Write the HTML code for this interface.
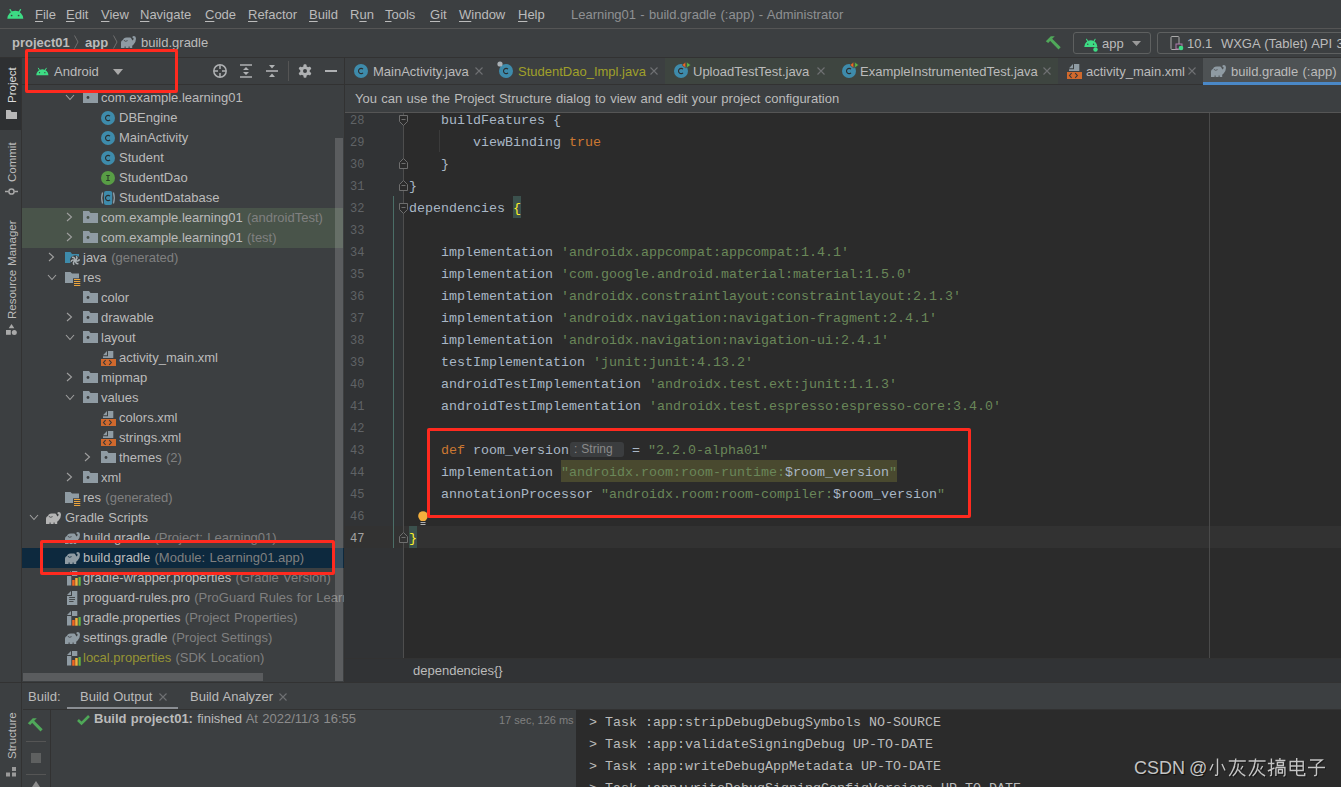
<!DOCTYPE html>
<html><head><meta charset="utf-8">
<style>
*{margin:0;padding:0;box-sizing:border-box}
html,body{width:1341px;height:787px;overflow:hidden;background:#3c3f41}
body{position:relative;font-family:"Liberation Sans",sans-serif;font-size:13px;color:#bbbbbb}
.a{position:absolute}
.t{position:absolute;white-space:pre;line-height:16px;height:16px;word-spacing:0.7px}
.m{position:absolute;white-space:pre;line-height:16px;height:16px;font-family:"Liberation Mono",monospace;font-size:13.33px}
.u{text-decoration:underline;text-underline-offset:2px}
svg{position:absolute;overflow:visible}
</style></head><body>

<div class="a" style="left:0px;top:28px;width:1341px;height:1px;background:#555555;"></div>
<svg style="left:7px;top:8px" width="17.0" height="11.0" viewBox="0 0 17 11"><path d="M0.3 10.8 A8 8 0 0 1 16.3 10.8 Z" fill="#3ddc84"/><path d="M4.6 4.2 L3.1 1.6 M12 4.2 L13.5 1.6" stroke="#3ddc84" stroke-width="1.3" stroke-linecap="round"/><circle cx="4.6" cy="7.5" r="0.85" fill="#3c3f41"/><circle cx="11.6" cy="7.5" r="0.85" fill="#3c3f41"/></svg>
<div class="t" style="left:35px;top:7px"><span class="u">F</span>ile</div>
<div class="t" style="left:66px;top:7px"><span class="u">E</span>dit</div>
<div class="t" style="left:101px;top:7px"><span class="u">V</span>iew</div>
<div class="t" style="left:140px;top:7px"><span class="u">N</span>avigate</div>
<div class="t" style="left:205px;top:7px"><span class="u">C</span>ode</div>
<div class="t" style="left:248px;top:7px"><span class="u">R</span>efactor</div>
<div class="t" style="left:309px;top:7px"><span class="u">B</span>uild</div>
<div class="t" style="left:350px;top:7px">R<span class="u">u</span>n</div>
<div class="t" style="left:385px;top:7px"><span class="u">T</span>ools</div>
<div class="t" style="left:430px;top:7px"><span class="u">G</span>it</div>
<div class="t" style="left:459px;top:7px"><span class="u">W</span>indow</div>
<div class="t" style="left:518px;top:7px"><span class="u">H</span>elp</div>
<div class="t" style="left:571px;top:7px;color:#8f9193">Learning01 - build.gradle (:app) - Administrator</div>
<div class="a" style="left:0px;top:57px;width:1341px;height:1px;background:#323232;"></div>
<div class="t" style="left:12px;top:35px;font-weight:700">project01</div>
<svg style="left:74px;top:35px" width="5" height="14" viewBox="0 0 5 14"><path d="M0.5 0.5 L4 7 L0.5 13.5" stroke="#6e6e6e" stroke-width="1" fill="none"/></svg>
<div class="t" style="left:85px;top:35px;font-weight:700">app</div>
<svg style="left:113px;top:35px" width="5" height="14" viewBox="0 0 5 14"><path d="M0.5 0.5 L4 7 L0.5 13.5" stroke="#6e6e6e" stroke-width="1" fill="none"/></svg>
<svg style="left:121px;top:36px" width="15" height="12" viewBox="0 0 15 12"><path d="M0 12 V6.5 Q0 4.6 1.8 4 L2.8 2.6 Q3.8 1.6 5.8 1.6 H8.8 Q10 1.6 10.6 3 L11.4 4.4 Q12.6 4 12.6 2.7 Q12.6 1.8 11.6 1.8 L11.2 1 Q11.9 0 13 0 Q15 0.3 15 2.8 Q15 6 12.6 8.4 L11.2 9.8 V12 H8.6 V10.6 H7.6 V12 H4.6 V10.6 H3.6 V12 Z" fill="#8f9ba3"/><path d="M2.8 4.3 Q4.6 6.2 6.6 4.6" stroke="#3c3f41" stroke-width="0.8" fill="none"/></svg>
<div class="t" style="left:141px;top:35px">build.gradle</div>
<svg style="left:1045px;top:35px" width="16" height="16" viewBox="0 0 16 16"><path d="M0.8 6.3 L5.8 1.2 H9.8 L7.2 3.8 L3.2 7.9 Z" fill="#50a85a"/><path d="M5.6 4.2 L14.6 13.4" stroke="#50a85a" stroke-width="3"/></svg>
<div class="a" style="left:1073px;top:32px;width:78px;height:22px;border:1px solid #5e6060;border-radius:3px"></div>
<svg style="left:1084px;top:38px" width="14.0" height="9.1" viewBox="0 0 17 11"><path d="M0.3 10.8 A8 8 0 0 1 16.3 10.8 Z" fill="#3ddc84"/><path d="M4.6 4.2 L3.1 1.6 M12 4.2 L13.5 1.6" stroke="#3ddc84" stroke-width="1.3" stroke-linecap="round"/><circle cx="4.6" cy="7.5" r="0.85" fill="#3c3f41"/><circle cx="11.6" cy="7.5" r="0.85" fill="#3c3f41"/></svg>
<svg style="left:1093px;top:47px" width="5" height="5"><circle cx="2.5" cy="2.5" r="2.2" fill="#3ddc84"/></svg>
<div class="t" style="left:1102px;top:36px">app</div>
<svg style="left:1132px;top:41px" width="9" height="5" viewBox="0 0 9 5"><path d="M0 0 H9 L4.5 5 Z" fill="#9a9a9a"/></svg>
<div class="a" style="left:1157px;top:32px;width:200px;height:22px;border:1px solid #5e6060;border-radius:3px"></div>
<svg style="left:1170px;top:36px" width="14" height="15" viewBox="0 0 14 15"><rect x="1" y="0.5" width="8" height="13" rx="1" stroke="#aaaaaa" stroke-width="1" fill="none"/><rect x="6" y="8" width="6" height="5" fill="#3c3f41" stroke="#b07ab0" stroke-width="1"/><circle cx="11" cy="12" r="2.3" fill="#3ddc84"/></svg>
<div class="t" style="left:1187px;top:36px">10.1  WXGA (Tablet) API 31</div>
<div class="a" style="left:21px;top:57px;width:1px;height:730px;background:#323232;"></div>
<div class="a" style="left:0px;top:58px;width:21px;height:72px;background:#2e3032;"></div>
<div class="t" style="left:4px;top:103px;transform:rotate(-90deg);transform-origin:0 0;font-size:11.5px;color:#dcdcdc">Project</div>
<svg style="left:6px;top:110px" width="11" height="9" viewBox="0 0 11 9"><path d="M0 0 H4.5 L5.5 2 H11 V9 H0 Z" fill="#b8b8b8"/></svg>
<div class="t" style="left:4px;top:182px;transform:rotate(-90deg);transform-origin:0 0;font-size:11.5px;color:#bbbbbb">Commit</div>
<svg style="left:5px;top:188px" width="13" height="7" viewBox="0 0 13 7"><circle cx="6.5" cy="3.5" r="2.6" stroke="#a9a9a9" stroke-width="1.5" fill="none"/><path d="M0 3.5 H3.5 M9.5 3.5 H13" stroke="#a9a9a9" stroke-width="1.5"/></svg>
<div class="t" style="left:4px;top:319px;transform:rotate(-90deg);transform-origin:0 0;font-size:11.5px;color:#bbbbbb">Resource Manager</div>
<svg style="left:6px;top:324px" width="11" height="11" viewBox="0 0 11 11"><path d="M5.5 0 L8.3 4.3 H2.7 Z" fill="#a9a9a9"/><rect x="0" y="6" width="4.8" height="4.8" fill="#a9a9a9"/><circle cx="8.3" cy="8.4" r="2.5" fill="#a9a9a9"/></svg>
<div class="t" style="left:4px;top:759px;transform:rotate(-90deg);transform-origin:0 0;font-size:11.5px;color:#bbbbbb">Structure</div>
<svg style="left:6px;top:767px" width="11" height="10" viewBox="0 0 11 10"><rect x="6" y="0" width="4" height="4" fill="#9a9a9a"/><rect x="0" y="5.5" width="4" height="4" fill="#9a9a9a"/><rect x="6" y="5.5" width="4" height="4" fill="#9a9a9a"/></svg>
<div class="a" style="left:344px;top:57px;width:1px;height:626px;background:#323232;"></div>
<div class="a" style="left:22px;top:84px;width:322px;height:1px;background:#323232;"></div>
<svg style="left:36px;top:67px" width="13.0" height="8.4" viewBox="0 0 17 11"><path d="M0.3 10.8 A8 8 0 0 1 16.3 10.8 Z" fill="#3ddc84"/><path d="M4.6 4.2 L3.1 1.6 M12 4.2 L13.5 1.6" stroke="#3ddc84" stroke-width="1.3" stroke-linecap="round"/><circle cx="4.6" cy="7.5" r="0.85" fill="#3c3f41"/><circle cx="11.6" cy="7.5" r="0.85" fill="#3c3f41"/></svg>
<div class="t" style="left:54px;top:64px">Android</div>
<svg style="left:113px;top:69px" width="10" height="6" viewBox="0 0 10 6"><path d="M0 0 H10 L5 6 Z" fill="#a9a9a9"/></svg>
<svg style="left:213px;top:64px" width="14" height="14" viewBox="0 0 14 14"><circle cx="7" cy="7" r="6.2" stroke="#afb1b3" stroke-width="1.5" fill="none"/><path d="M7 1 V5 M7 9 V13 M1 7 H5 M9 7 H13" stroke="#afb1b3" stroke-width="1.5"/></svg>
<svg style="left:240px;top:64px" width="12" height="14" viewBox="0 0 12 14"><path d="M0 1 H12 M0 13 H12" stroke="#afb1b3" stroke-width="1.6"/><path d="M3 6 L6 3 L9 6 Z M3 8 L6 11 L9 8 Z" fill="#afb1b3"/></svg>
<svg style="left:266px;top:64px" width="12" height="14" viewBox="0 0 12 14"><path d="M0 7 H12" stroke="#afb1b3" stroke-width="1.6"/><path d="M3 1 L6 4.5 L9 1 Z M3 13 L6 9.5 L9 13 Z" fill="#afb1b3"/></svg>
<div class="a" style="left:288px;top:61px;width:1px;height:20px;background:#555555;"></div>
<svg style="left:298px;top:64px" width="14" height="14" viewBox="0 0 14 14"><g fill="#afb1b3"><circle cx="7" cy="7" r="4.8"/><rect x="5.5" y="0.3" width="3" height="13.4" rx="1"/><rect x="5.5" y="0.3" width="3" height="13.4" rx="1" transform="rotate(60 7 7)"/><rect x="5.5" y="0.3" width="3" height="13.4" rx="1" transform="rotate(120 7 7)"/></g><circle cx="7" cy="7" r="2" fill="#3c3f41"/></svg>
<div class="a" style="left:325px;top:70px;width:12px;height:2px;background:#afb1b3;"></div>
<div class="a" style="left:0;top:0;width:344px;height:683px;overflow:hidden">
<div class="a" style="left:22px;top:208px;width:321px;height:40px;background:#49544a;"></div>
<div class="a" style="left:22px;top:548px;width:322px;height:20px;background:#0d293e;"></div>
<svg style="left:65px;top:94px" width="10" height="7" viewBox="0 0 10 7"><path d="M1 1 L5 5.5 L9 1" stroke="#a0a0a0" stroke-width="1.1" fill="none"/></svg>
<svg style="left:83px;top:91px" width="15" height="12" viewBox="0 0 15 12"><path d="M0 0 H6 L7.5 2 H15 V12 H0 Z" fill="#8f9ba3"/><circle cx="5" cy="6.5" r="1.4" fill="#3c3f41"/></svg>
<div class="t" style="left:101px;top:90px">com.example.learning01</div>
<svg style="left:101px;top:111px" width="14" height="14" viewBox="0 0 14 14"><circle cx="7" cy="7" r="7" fill="#3e8bab"/><path d="M9 5.2 A2.6 2.6 0 1 0 9 8.8" stroke="#2b2d2e" stroke-width="1.1" fill="none"/></svg>
<div class="t" style="left:119px;top:110px">DBEngine</div>
<svg style="left:101px;top:131px" width="14" height="14" viewBox="0 0 14 14"><circle cx="7" cy="7" r="7" fill="#3e8bab"/><path d="M9 5.2 A2.6 2.6 0 1 0 9 8.8" stroke="#2b2d2e" stroke-width="1.1" fill="none"/></svg>
<div class="t" style="left:119px;top:130px">MainActivity</div>
<svg style="left:101px;top:151px" width="14" height="14" viewBox="0 0 14 14"><circle cx="7" cy="7" r="7" fill="#3e8bab"/><path d="M9 5.2 A2.6 2.6 0 1 0 9 8.8" stroke="#2b2d2e" stroke-width="1.1" fill="none"/></svg>
<div class="t" style="left:119px;top:150px">Student</div>
<svg style="left:101px;top:171px" width="14" height="14" viewBox="0 0 14 14"><circle cx="7" cy="7" r="7" fill="#589d45"/><path d="M5.2 4.5 H8.8 M7 4.5 V9.5 M5.2 9.5 H8.8" stroke="#2b3f29" stroke-width="1.1" fill="none"/></svg>
<div class="t" style="left:119px;top:170px">StudentDao</div>
<svg style="left:101px;top:191px" width="14" height="14" viewBox="0 0 14 14"><path d="M1.6 1.5 Q-0.3 7 1.6 12.5 M12.4 1.5 Q14.3 7 12.4 12.5" stroke="#8f9ba3" stroke-width="1.3" fill="none"/><rect x="3" y="0" width="8.2" height="14" rx="2" fill="#3e8bab"/><path d="M9 5.2 A2.6 2.6 0 1 0 9 8.8" stroke="#2b2d2e" stroke-width="1.1" fill="none"/></svg>
<div class="t" style="left:119px;top:190px">StudentDatabase</div>
<svg style="left:66px;top:212px" width="7" height="10" viewBox="0 0 7 10"><path d="M1 1 L5.5 5 L1 9" stroke="#a0a0a0" stroke-width="1.1" fill="none"/></svg>
<svg style="left:83px;top:211px" width="15" height="12" viewBox="0 0 15 12"><path d="M0 0 H6 L7.5 2 H15 V12 H0 Z" fill="#8f9ba3"/><circle cx="5" cy="6.5" r="1.4" fill="#49544a"/></svg>
<div class="t" style="left:101px;top:210px">com.example.learning01<span style="color:#808080"> (androidTest)</span></div>
<svg style="left:66px;top:232px" width="7" height="10" viewBox="0 0 7 10"><path d="M1 1 L5.5 5 L1 9" stroke="#a0a0a0" stroke-width="1.1" fill="none"/></svg>
<svg style="left:83px;top:231px" width="15" height="12" viewBox="0 0 15 12"><path d="M0 0 H6 L7.5 2 H15 V12 H0 Z" fill="#8f9ba3"/><circle cx="5" cy="6.5" r="1.4" fill="#49544a"/></svg>
<div class="t" style="left:101px;top:230px">com.example.learning01<span style="color:#808080"> (test)</span></div>
<svg style="left:48px;top:252px" width="7" height="10" viewBox="0 0 7 10"><path d="M1 1 L5.5 5 L1 9" stroke="#a0a0a0" stroke-width="1.1" fill="none"/></svg>
<svg style="left:65px;top:250px" width="16" height="16" viewBox="0 0 16 16"><path d="M0 2 H5.5 L7 4 H14 V13 H0 Z" fill="#3e8bab"/><circle cx="10.2" cy="10.5" r="5.2" fill="#3c3f41"/><g stroke="#aab1b5" stroke-width="1.5" fill="none"><path d="M10.2 10.5 Q13.2 8.2 11.2 6.2" transform="rotate(0 10.2 10.5)"/><path d="M10.2 10.5 Q13.2 8.2 11.2 6.2" transform="rotate(60 10.2 10.5)"/><path d="M10.2 10.5 Q13.2 8.2 11.2 6.2" transform="rotate(120 10.2 10.5)"/><path d="M10.2 10.5 Q13.2 8.2 11.2 6.2" transform="rotate(180 10.2 10.5)"/><path d="M10.2 10.5 Q13.2 8.2 11.2 6.2" transform="rotate(240 10.2 10.5)"/><path d="M10.2 10.5 Q13.2 8.2 11.2 6.2" transform="rotate(300 10.2 10.5)"/></g></svg>
<div class="t" style="left:83px;top:250px">java<span style="color:#808080"> (generated)</span></div>
<svg style="left:47px;top:274px" width="10" height="7" viewBox="0 0 10 7"><path d="M1 1 L5 5.5 L9 1" stroke="#a0a0a0" stroke-width="1.1" fill="none"/></svg>
<svg style="left:65px;top:270px" width="16" height="17" viewBox="0 0 16 17"><path d="M0 2 H5.5 L7 3.5 H14 V13 H0 Z" fill="#8f9ba3"/><rect x="8" y="8.3" width="8" height="8.5" fill="#3c3f41"/><path d="M9 9.5 H15.3 M9 11.5 H15.3 M9 13.5 H15.3 M9 15.5 H15.3" stroke="#e8a33d" stroke-width="1.1"/></svg>
<div class="t" style="left:83px;top:270px">res</div>
<svg style="left:83px;top:291px" width="15" height="12" viewBox="0 0 15 12"><path d="M0 0 H6 L7.5 2 H15 V12 H0 Z" fill="#8f9ba3"/><circle cx="5" cy="6.5" r="1.4" fill="#3c3f41"/></svg>
<div class="t" style="left:101px;top:290px">color</div>
<svg style="left:66px;top:312px" width="7" height="10" viewBox="0 0 7 10"><path d="M1 1 L5.5 5 L1 9" stroke="#a0a0a0" stroke-width="1.1" fill="none"/></svg>
<svg style="left:83px;top:311px" width="15" height="12" viewBox="0 0 15 12"><path d="M0 0 H6 L7.5 2 H15 V12 H0 Z" fill="#8f9ba3"/><circle cx="5" cy="6.5" r="1.4" fill="#3c3f41"/></svg>
<div class="t" style="left:101px;top:310px">drawable</div>
<svg style="left:65px;top:334px" width="10" height="7" viewBox="0 0 10 7"><path d="M1 1 L5 5.5 L9 1" stroke="#a0a0a0" stroke-width="1.1" fill="none"/></svg>
<svg style="left:83px;top:331px" width="15" height="12" viewBox="0 0 15 12"><path d="M0 0 H6 L7.5 2 H15 V12 H0 Z" fill="#8f9ba3"/><circle cx="5" cy="6.5" r="1.4" fill="#3c3f41"/></svg>
<div class="t" style="left:101px;top:330px">layout</div>
<svg style="left:101px;top:351px" width="15" height="15" viewBox="0 0 15 15"><path d="M2 4.2 L6 0 V4.2 Z" fill="#8f9ba3"/><path d="M7 0 H12.3 V7 H2 V5.2 H7 Z" fill="#8f9ba3"/><rect x="0" y="8" width="15" height="7" fill="#d0692d"/><path d="M4.6 9.2 L2.5 11.5 L4.6 13.8 M8.2 9.2 L10.3 11.5 L8.2 13.8" stroke="#35373a" stroke-width="1.1" fill="none"/></svg>
<div class="t" style="left:119px;top:350px">activity_main.xml</div>
<svg style="left:66px;top:372px" width="7" height="10" viewBox="0 0 7 10"><path d="M1 1 L5.5 5 L1 9" stroke="#a0a0a0" stroke-width="1.1" fill="none"/></svg>
<svg style="left:83px;top:371px" width="15" height="12" viewBox="0 0 15 12"><path d="M0 0 H6 L7.5 2 H15 V12 H0 Z" fill="#8f9ba3"/><circle cx="5" cy="6.5" r="1.4" fill="#3c3f41"/></svg>
<div class="t" style="left:101px;top:370px">mipmap</div>
<svg style="left:65px;top:394px" width="10" height="7" viewBox="0 0 10 7"><path d="M1 1 L5 5.5 L9 1" stroke="#a0a0a0" stroke-width="1.1" fill="none"/></svg>
<svg style="left:83px;top:391px" width="15" height="12" viewBox="0 0 15 12"><path d="M0 0 H6 L7.5 2 H15 V12 H0 Z" fill="#8f9ba3"/><circle cx="5" cy="6.5" r="1.4" fill="#3c3f41"/></svg>
<div class="t" style="left:101px;top:390px">values</div>
<svg style="left:101px;top:411px" width="15" height="15" viewBox="0 0 15 15"><path d="M2 4.2 L6 0 V4.2 Z" fill="#8f9ba3"/><path d="M7 0 H12.3 V7 H2 V5.2 H7 Z" fill="#8f9ba3"/><rect x="0" y="8" width="15" height="7" fill="#d0692d"/><path d="M4.6 9.2 L2.5 11.5 L4.6 13.8 M8.2 9.2 L10.3 11.5 L8.2 13.8" stroke="#35373a" stroke-width="1.1" fill="none"/></svg>
<div class="t" style="left:119px;top:410px">colors.xml</div>
<svg style="left:101px;top:431px" width="15" height="15" viewBox="0 0 15 15"><path d="M2 4.2 L6 0 V4.2 Z" fill="#8f9ba3"/><path d="M7 0 H12.3 V7 H2 V5.2 H7 Z" fill="#8f9ba3"/><rect x="0" y="8" width="15" height="7" fill="#d0692d"/><path d="M4.6 9.2 L2.5 11.5 L4.6 13.8 M8.2 9.2 L10.3 11.5 L8.2 13.8" stroke="#35373a" stroke-width="1.1" fill="none"/></svg>
<div class="t" style="left:119px;top:430px">strings.xml</div>
<svg style="left:84px;top:452px" width="7" height="10" viewBox="0 0 7 10"><path d="M1 1 L5.5 5 L1 9" stroke="#a0a0a0" stroke-width="1.1" fill="none"/></svg>
<svg style="left:101px;top:451px" width="15" height="12" viewBox="0 0 15 12"><path d="M0 0 H6 L7.5 2 H15 V12 H0 Z" fill="#8f9ba3"/><circle cx="5" cy="6.5" r="1.4" fill="#3c3f41"/></svg>
<div class="t" style="left:119px;top:450px">themes<span style="color:#808080"> (2)</span></div>
<svg style="left:66px;top:472px" width="7" height="10" viewBox="0 0 7 10"><path d="M1 1 L5.5 5 L1 9" stroke="#a0a0a0" stroke-width="1.1" fill="none"/></svg>
<svg style="left:83px;top:471px" width="15" height="12" viewBox="0 0 15 12"><path d="M0 0 H6 L7.5 2 H15 V12 H0 Z" fill="#8f9ba3"/><circle cx="5" cy="6.5" r="1.4" fill="#3c3f41"/></svg>
<div class="t" style="left:101px;top:470px">xml</div>
<svg style="left:65px;top:490px" width="16" height="17" viewBox="0 0 16 17"><path d="M0 2 H5.5 L7 3.5 H14 V13 H0 Z" fill="#8f9ba3"/><rect x="8" y="8.3" width="8" height="8.5" fill="#3c3f41"/><path d="M9 9.5 H15.3 M9 11.5 H15.3 M9 13.5 H15.3 M9 15.5 H15.3" stroke="#e8a33d" stroke-width="1.1"/></svg>
<div class="t" style="left:83px;top:490px">res<span style="color:#808080"> (generated)</span></div>
<svg style="left:29px;top:514px" width="10" height="7" viewBox="0 0 10 7"><path d="M1 1 L5 5.5 L9 1" stroke="#a0a0a0" stroke-width="1.1" fill="none"/></svg>
<svg style="left:46px;top:512px" width="15" height="12" viewBox="0 0 15 12"><path d="M0 12 V6.5 Q0 4.6 1.8 4 L2.8 2.6 Q3.8 1.6 5.8 1.6 H8.8 Q10 1.6 10.6 3 L11.4 4.4 Q12.6 4 12.6 2.7 Q12.6 1.8 11.6 1.8 L11.2 1 Q11.9 0 13 0 Q15 0.3 15 2.8 Q15 6 12.6 8.4 L11.2 9.8 V12 H8.6 V10.6 H7.6 V12 H4.6 V10.6 H3.6 V12 Z" fill="#b4b4b4"/><path d="M2.8 4.3 Q4.6 6.2 6.6 4.6" stroke="#3c3f41" stroke-width="0.8" fill="none"/></svg>
<div class="t" style="left:65px;top:510px">Gradle Scripts</div>
<svg style="left:65px;top:532px" width="15" height="12" viewBox="0 0 15 12"><path d="M0 12 V6.5 Q0 4.6 1.8 4 L2.8 2.6 Q3.8 1.6 5.8 1.6 H8.8 Q10 1.6 10.6 3 L11.4 4.4 Q12.6 4 12.6 2.7 Q12.6 1.8 11.6 1.8 L11.2 1 Q11.9 0 13 0 Q15 0.3 15 2.8 Q15 6 12.6 8.4 L11.2 9.8 V12 H8.6 V10.6 H7.6 V12 H4.6 V10.6 H3.6 V12 Z" fill="#8f9ba3"/><path d="M2.8 4.3 Q4.6 6.2 6.6 4.6" stroke="#3c3f41" stroke-width="0.8" fill="none"/></svg>
<div class="t" style="left:83px;top:530px">build.gradle<span style="color:#808080"> (Project: Learning01)</span></div>
<svg style="left:65px;top:552px" width="15" height="12" viewBox="0 0 15 12"><path d="M0 12 V6.5 Q0 4.6 1.8 4 L2.8 2.6 Q3.8 1.6 5.8 1.6 H8.8 Q10 1.6 10.6 3 L11.4 4.4 Q12.6 4 12.6 2.7 Q12.6 1.8 11.6 1.8 L11.2 1 Q11.9 0 13 0 Q15 0.3 15 2.8 Q15 6 12.6 8.4 L11.2 9.8 V12 H8.6 V10.6 H7.6 V12 H4.6 V10.6 H3.6 V12 Z" fill="#8f9ba3"/><path d="M2.8 4.3 Q4.6 6.2 6.6 4.6" stroke="#0d293e" stroke-width="0.8" fill="none"/></svg>
<div class="t" style="left:83px;top:550px">build.gradle<span style="color:#808080"> (Module: Learning01.app)</span></div>
<svg style="left:67px;top:571px" width="15" height="15" viewBox="0 0 15 15"><path d="M0 4 L4 0 V4 Z" fill="#8f9ba3"/><path d="M5 0 H10.3 V14.5 H0 V5 H5 Z" fill="#8f9ba3"/><rect x="4.3" y="5" width="11" height="10" fill="#3c3f41"/><rect x="5.2" y="9" width="2.5" height="5.7" fill="#f26522"/><rect x="8.2" y="7" width="2.5" height="7.7" fill="#f4af3d"/><rect x="11.5" y="6" width="2.2" height="8.7" fill="#62b543"/></svg>
<div class="t" style="left:83px;top:570px">gradle-wrapper.properties<span style="color:#808080"> (Gradle Version)</span></div>
<svg style="left:67px;top:591px" width="11" height="15" viewBox="0 0 11 15"><path d="M0 4 L4 0 V4 Z" fill="#8f9ba3"/><path d="M5 0 H10.3 V14 H0 V5 H5 Z" fill="#8f9ba3"/><path d="M2.2 6.5 H8 M2.2 8.5 H8 M2.2 10.5 H6.5" stroke="#3c3f41" stroke-width="0.9"/></svg>
<div class="t" style="left:83px;top:590px">proguard-rules.pro<span style="color:#808080"> (ProGuard Rules for Learning01.app)</span></div>
<svg style="left:67px;top:611px" width="15" height="15" viewBox="0 0 15 15"><path d="M0 4 L4 0 V4 Z" fill="#8f9ba3"/><path d="M5 0 H10.3 V14.5 H0 V5 H5 Z" fill="#8f9ba3"/><rect x="4.3" y="5" width="11" height="10" fill="#3c3f41"/><rect x="5.2" y="9" width="2.5" height="5.7" fill="#f26522"/><rect x="8.2" y="7" width="2.5" height="7.7" fill="#f4af3d"/><rect x="11.5" y="6" width="2.2" height="8.7" fill="#62b543"/></svg>
<div class="t" style="left:83px;top:610px">gradle.properties<span style="color:#808080"> (Project Properties)</span></div>
<svg style="left:65px;top:632px" width="15" height="12" viewBox="0 0 15 12"><path d="M0 12 V6.5 Q0 4.6 1.8 4 L2.8 2.6 Q3.8 1.6 5.8 1.6 H8.8 Q10 1.6 10.6 3 L11.4 4.4 Q12.6 4 12.6 2.7 Q12.6 1.8 11.6 1.8 L11.2 1 Q11.9 0 13 0 Q15 0.3 15 2.8 Q15 6 12.6 8.4 L11.2 9.8 V12 H8.6 V10.6 H7.6 V12 H4.6 V10.6 H3.6 V12 Z" fill="#8f9ba3"/><path d="M2.8 4.3 Q4.6 6.2 6.6 4.6" stroke="#3c3f41" stroke-width="0.8" fill="none"/></svg>
<div class="t" style="left:83px;top:630px">settings.gradle<span style="color:#808080"> (Project Settings)</span></div>
<svg style="left:67px;top:651px" width="15" height="15" viewBox="0 0 15 15"><path d="M0 4 L4 0 V4 Z" fill="#8f9ba3"/><path d="M5 0 H10.3 V14.5 H0 V5 H5 Z" fill="#8f9ba3"/><rect x="4.3" y="5" width="11" height="10" fill="#3c3f41"/><rect x="5.2" y="9" width="2.5" height="5.7" fill="#f26522"/><rect x="8.2" y="7" width="2.5" height="7.7" fill="#f4af3d"/><rect x="11.5" y="6" width="2.2" height="8.7" fill="#62b543"/></svg>
<div class="t" style="left:83px;top:650px;color:#969434">local.properties<span style="color:#808080"> (SDK Location)</span></div>
</div>
<div class="a" style="left:335px;top:138px;width:8px;height:543px;background:rgba(255,255,255,0.16);"></div>
<div class="a" style="left:23px;top:673px;width:240px;height:8px;background:#5a5c5e;"></div>
<div class="a" style="left:345px;top:84px;width:996px;height:1px;background:#323232;"></div>
<div class="a" style="left:665px;top:58px;width:393px;height:26px;background:#3e4540;"></div>
<div class="a" style="left:1203px;top:58px;width:138px;height:26px;background:#4e5254;"></div>
<svg style="left:354px;top:64px" width="14" height="14" viewBox="0 0 14 14"><circle cx="7" cy="7" r="7" fill="#3e8bab"/><path d="M9 5.2 A2.6 2.6 0 1 0 9 8.8" stroke="#2b2d2e" stroke-width="1.1" fill="none"/></svg>
<div class="t" style="left:373px;top:64px">MainActivity.java</div>
<svg style="left:475px;top:67px" width="8" height="8" viewBox="0 0 8 8"><path d="M0.5 0.5 L7.5 7.5 M7.5 0.5 L0.5 7.5" stroke="#6f7173" stroke-width="1.1"/></svg>
<svg style="left:499px;top:64px" width="14" height="14" viewBox="0 0 14 14"><circle cx="7" cy="7" r="7" fill="#3e8bab"/><path d="M9 5.2 A2.6 2.6 0 1 0 9 8.8" stroke="#2b2d2e" stroke-width="1.1" fill="none"/></svg>
<svg style="left:497px;top:61px" width="6" height="6"><circle cx="3" cy="3" r="2.6" fill="#a9b0b5"/></svg>
<div class="t" style="left:518px;top:64px;color:#a0a02a">StudentDao_Impl.java</div>
<svg style="left:650px;top:67px" width="8" height="8" viewBox="0 0 8 8"><path d="M0.5 0.5 L7.5 7.5 M7.5 0.5 L0.5 7.5" stroke="#6f7173" stroke-width="1.1"/></svg>
<svg style="left:674px;top:64px" width="14" height="14" viewBox="0 0 14 14"><circle cx="7" cy="7" r="7" fill="#3e8bab"/><path d="M9 5.2 A2.6 2.6 0 1 0 9 8.8" stroke="#2b2d2e" stroke-width="1.1" fill="none"/></svg>
<svg style="left:682px;top:62px" width="9" height="7" viewBox="0 0 9 7"><path d="M3.7 0 V6 L0 3 Z" fill="#f26522" stroke="#3e4540" stroke-width="0.6"/><path d="M4.7 0 V6 L8.6 3 Z" fill="#62b543" stroke="#3e4540" stroke-width="0.6"/></svg>
<div class="t" style="left:693px;top:64px">UploadTestTest.java</div>
<svg style="left:817px;top:67px" width="8" height="8" viewBox="0 0 8 8"><path d="M0.5 0.5 L7.5 7.5 M7.5 0.5 L0.5 7.5" stroke="#6f7173" stroke-width="1.1"/></svg>
<svg style="left:842px;top:64px" width="14" height="14" viewBox="0 0 14 14"><circle cx="7" cy="7" r="7" fill="#3e8bab"/><path d="M9 5.2 A2.6 2.6 0 1 0 9 8.8" stroke="#2b2d2e" stroke-width="1.1" fill="none"/></svg>
<svg style="left:850px;top:62px" width="9" height="7" viewBox="0 0 9 7"><path d="M3.7 0 V6 L0 3 Z" fill="#f26522" stroke="#3e4540" stroke-width="0.6"/><path d="M4.7 0 V6 L8.6 3 Z" fill="#62b543" stroke="#3e4540" stroke-width="0.6"/></svg>
<div class="t" style="left:860px;top:64px">ExampleInstrumentedTest.java</div>
<svg style="left:1043px;top:67px" width="8" height="8" viewBox="0 0 8 8"><path d="M0.5 0.5 L7.5 7.5 M7.5 0.5 L0.5 7.5" stroke="#6f7173" stroke-width="1.1"/></svg>
<svg style="left:1067px;top:64px" width="15" height="15" viewBox="0 0 15 15"><path d="M2 4.2 L6 0 V4.2 Z" fill="#8f9ba3"/><path d="M7 0 H12.3 V7 H2 V5.2 H7 Z" fill="#8f9ba3"/><rect x="0" y="8" width="15" height="7" fill="#d0692d"/><path d="M4.6 9.2 L2.5 11.5 L4.6 13.8 M8.2 9.2 L10.3 11.5 L8.2 13.8" stroke="#35373a" stroke-width="1.1" fill="none"/></svg>
<div class="t" style="left:1086px;top:64px">activity_main.xml</div>
<svg style="left:1188px;top:67px" width="8" height="8" viewBox="0 0 8 8"><path d="M0.5 0.5 L7.5 7.5 M7.5 0.5 L0.5 7.5" stroke="#6f7173" stroke-width="1.1"/></svg>
<svg style="left:1211px;top:65px" width="15" height="12" viewBox="0 0 15 12"><path d="M0 12 V6.5 Q0 4.6 1.8 4 L2.8 2.6 Q3.8 1.6 5.8 1.6 H8.8 Q10 1.6 10.6 3 L11.4 4.4 Q12.6 4 12.6 2.7 Q12.6 1.8 11.6 1.8 L11.2 1 Q11.9 0 13 0 Q15 0.3 15 2.8 Q15 6 12.6 8.4 L11.2 9.8 V12 H8.6 V10.6 H7.6 V12 H4.6 V10.6 H3.6 V12 Z" fill="#8f9ba3"/><path d="M2.8 4.3 Q4.6 6.2 6.6 4.6" stroke="#4e5254" stroke-width="0.8" fill="none"/></svg>
<div class="t" style="left:1231px;top:64px">build.gradle (:app)</div>
<div class="a" style="left:1203px;top:82px;width:138px;height:3px;background:#4a88c7;"></div>
<div class="a" style="left:345px;top:85px;width:996px;height:27px;background:#3c3f41;"></div>
<div class="t" style="left:355px;top:91px">You can use the Project Structure dialog to view and edit your project configuration</div>
<div class="a" style="left:345px;top:112px;width:996px;height:1px;background:#555555;"></div>
<div class="a" style="left:345px;top:113px;width:996px;height:545px;background:#2b2b2b;"></div>
<div class="a" style="left:345px;top:113px;width:58px;height:545px;background:#313335;"></div>
<div class="a" style="left:345px;top:526px;width:996px;height:22px;background:#323232;"></div>
<div class="a" style="left:1209px;top:113px;width:1px;height:545px;background:#4a4a4a;"></div>
<div class="a" style="left:393px;top:196px;width:1px;height:352px;background:#4b6e67;"></div>
<div class="a" style="left:403px;top:113px;width:1px;height:545px;background:#4e4e4e;"></div>
<div class="a" style="left:513px;top:196px;width:8px;height:22px;background:#3b514d;"></div>
<div class="a" style="left:409px;top:526px;width:8px;height:22px;background:#3b514d;"></div>
<div class="a" style="left:561px;top:460px;width:336px;height:22px;background:#49492f;"></div>
<div class="m" style="left:350px;top:113px;color:#606366;font-size:12px">28</div>
<div class="m" style="left:409px;top:112.5px;color:#a9b7c6">    buildFeatures {</div>
<div class="m" style="left:350px;top:135px;color:#606366;font-size:12px">29</div>
<div class="m" style="left:409px;top:134.5px;color:#a9b7c6">        viewBinding <span style="color:#cc7832">true</span></div>
<div class="m" style="left:350px;top:157px;color:#606366;font-size:12px">30</div>
<div class="m" style="left:409px;top:156.5px;color:#a9b7c6">    }</div>
<div class="m" style="left:350px;top:179px;color:#606366;font-size:12px">31</div>
<div class="m" style="left:409px;top:178.5px;color:#a9b7c6">}</div>
<div class="m" style="left:350px;top:201px;color:#606366;font-size:12px">32</div>
<div class="m" style="left:409px;top:200.5px;color:#a9b7c6">dependencies <span style="color:#ffef28">{</span></div>
<div class="m" style="left:350px;top:223px;color:#606366;font-size:12px">33</div>
<div class="m" style="left:350px;top:245px;color:#606366;font-size:12px">34</div>
<div class="m" style="left:409px;top:244.5px;color:#a9b7c6">    implementation <span style="color:#6a8759">'androidx.appcompat:appcompat:1.4.1'</span></div>
<div class="m" style="left:350px;top:267px;color:#606366;font-size:12px">35</div>
<div class="m" style="left:409px;top:266.5px;color:#a9b7c6">    implementation <span style="color:#6a8759">'com.google.android.material:material:1.5.0'</span></div>
<div class="m" style="left:350px;top:289px;color:#606366;font-size:12px">36</div>
<div class="m" style="left:409px;top:288.5px;color:#a9b7c6">    implementation <span style="color:#6a8759">'androidx.constraintlayout:constraintlayout:2.1.3'</span></div>
<div class="m" style="left:350px;top:311px;color:#606366;font-size:12px">37</div>
<div class="m" style="left:409px;top:310.5px;color:#a9b7c6">    implementation <span style="color:#6a8759">'androidx.navigation:navigation-fragment:2.4.1'</span></div>
<div class="m" style="left:350px;top:333px;color:#606366;font-size:12px">38</div>
<div class="m" style="left:409px;top:332.5px;color:#a9b7c6">    implementation <span style="color:#6a8759">'androidx.navigation:navigation-ui:2.4.1'</span></div>
<div class="m" style="left:350px;top:355px;color:#606366;font-size:12px">39</div>
<div class="m" style="left:409px;top:354.5px;color:#a9b7c6">    testImplementation <span style="color:#6a8759">'junit:junit:4.13.2'</span></div>
<div class="m" style="left:350px;top:377px;color:#606366;font-size:12px">40</div>
<div class="m" style="left:409px;top:376.5px;color:#a9b7c6">    androidTestImplementation <span style="color:#6a8759">'androidx.test.ext:junit:1.1.3'</span></div>
<div class="m" style="left:350px;top:399px;color:#606366;font-size:12px">41</div>
<div class="m" style="left:409px;top:398.5px;color:#a9b7c6">    androidTestImplementation <span style="color:#6a8759">'androidx.test.espresso:espresso-core:3.4.0'</span></div>
<div class="m" style="left:350px;top:421px;color:#606366;font-size:12px">42</div>
<div class="m" style="left:350px;top:443px;color:#606366;font-size:12px">43</div>
<div class="m" style="left:409px;top:442.5px;color:#a9b7c6">    <span style="color:#cc7832">def</span> room_version<span style="display:inline-block;width:55px"></span> = <span style="color:#6a8759">"2.2.0-alpha01"</span></div>
<div class="m" style="left:350px;top:465px;color:#606366;font-size:12px">44</div>
<div class="m" style="left:409px;top:464.5px;color:#a9b7c6">    implementation <span style="color:#6a8759">"androidx.room:room-runtime:</span>$room_version<span style="color:#6a8759">"</span></div>
<div class="m" style="left:350px;top:487px;color:#606366;font-size:12px">45</div>
<div class="m" style="left:409px;top:486.5px;color:#a9b7c6">    annotationProcessor <span style="color:#6a8759">"androidx.room:room-compiler:</span>$room_version<span style="color:#6a8759">"</span></div>
<div class="m" style="left:350px;top:509px;color:#606366;font-size:12px">46</div>
<div class="m" style="left:350px;top:531px;color:#a4a3a3;font-size:12px">47</div>
<div class="m" style="left:409px;top:530.5px;color:#a9b7c6"><span style="color:#ffef28">}</span></div>
<div class="a" style="left:570px;top:442px;width:54px;height:15px;background:#3b3d3f;border-radius:3px"></div>
<div class="t" style="left:574px;top:441px;color:#8a8a8a;font-size:12px">: String</div>
<svg style="left:399px;top:115px" width="9" height="11" viewBox="0 0 9 11"><path d="M0.5 0.5 H8.5 V6.5 L4.5 10.5 L0.5 6.5 Z" fill="#2b2b2b" stroke="#6e6e6e" stroke-width="1"/><path d="M2.5 4.5 H6.5" stroke="#6e6e6e" stroke-width="1"/></svg>
<svg style="left:399px;top:158px" width="9" height="11" viewBox="0 0 9 11"><path d="M0.5 10.5 H8.5 V4.5 L4.5 0.5 L0.5 4.5 Z" fill="#2b2b2b" stroke="#6e6e6e" stroke-width="1"/><path d="M2.5 5.5 H6.5" stroke="#6e6e6e" stroke-width="1"/></svg>
<svg style="left:399px;top:180px" width="9" height="11" viewBox="0 0 9 11"><path d="M0.5 10.5 H8.5 V4.5 L4.5 0.5 L0.5 4.5 Z" fill="#2b2b2b" stroke="#6e6e6e" stroke-width="1"/><path d="M2.5 5.5 H6.5" stroke="#6e6e6e" stroke-width="1"/></svg>
<svg style="left:399px;top:203px" width="9" height="11" viewBox="0 0 9 11"><path d="M0.5 0.5 H8.5 V6.5 L4.5 10.5 L0.5 6.5 Z" fill="#2b2b2b" stroke="#6e6e6e" stroke-width="1"/><path d="M2.5 4.5 H6.5" stroke="#6e6e6e" stroke-width="1"/></svg>
<svg style="left:399px;top:532px" width="9" height="11" viewBox="0 0 9 11"><path d="M0.5 10.5 H8.5 V4.5 L4.5 0.5 L0.5 4.5 Z" fill="#323232" stroke="#6e6e6e" stroke-width="1"/><path d="M2.5 5.5 H6.5" stroke="#6e6e6e" stroke-width="1"/></svg>
<div class="a" style="left:439px;top:130px;width:1px;height:22px;background:#3b3b3b;"></div>
<svg style="left:418px;top:511px" width="10" height="15" viewBox="0 0 10 15"><circle cx="5" cy="5" r="4.8" fill="#f4af3d"/><rect x="2.5" y="8" width="5" height="2" fill="#f4af3d"/><path d="M2.5 11.5 H7.5 M2.5 13.5 H7.5" stroke="#b0b0b0" stroke-width="1"/></svg>
<div class="a" style="left:345px;top:658px;width:996px;height:1px;background:#323232;"></div>
<div class="a" style="left:345px;top:659px;width:996px;height:23px;background:#313335;"></div>
<div class="t" style="left:413px;top:663px">dependencies{}</div>
<div class="a" style="left:0px;top:682px;width:1341px;height:1px;background:#323232;"></div>
<div class="a" style="left:23px;top:683px;width:1318px;height:26px;background:#3c3f41;"></div>
<div class="t" style="left:28px;top:689px">Build:</div>
<div class="t" style="left:80px;top:689px">Build Output</div>
<svg style="left:159px;top:693px" width="8" height="8" viewBox="0 0 8 8"><path d="M0.5 0.5 L7.5 7.5 M7.5 0.5 L0.5 7.5" stroke="#6f7173" stroke-width="1.1"/></svg>
<div class="a" style="left:67px;top:707px;width:111px;height:3px;background:#8a8e93;"></div>
<div class="t" style="left:190px;top:689px">Build Analyzer</div>
<svg style="left:279px;top:693px" width="8" height="8" viewBox="0 0 8 8"><path d="M0.5 0.5 L7.5 7.5 M7.5 0.5 L0.5 7.5" stroke="#6f7173" stroke-width="1.1"/></svg>
<div class="a" style="left:23px;top:709px;width:1318px;height:1px;background:#323232;"></div>
<div class="a" style="left:50px;top:710px;width:1px;height:77px;background:#323232;"></div>
<svg style="left:27px;top:717px" width="16" height="16" viewBox="0 0 16 16"><path d="M0.8 6.3 L5.8 1.2 H9.8 L7.2 3.8 L3.2 7.9 Z" fill="#50a85a"/><path d="M5.6 4.2 L14.6 13.4" stroke="#50a85a" stroke-width="3"/></svg>
<div class="a" style="left:26px;top:741px;width:20px;height:1px;background:#555555;"></div>
<div class="a" style="left:31px;top:753px;width:10px;height:10px;background:#5e6060;"></div>
<div class="a" style="left:26px;top:774px;width:20px;height:1px;background:#555555;"></div>
<svg style="left:32px;top:781px" width="8" height="6" viewBox="0 0 8 6"><path d="M0 6 L4 0 L8 6 Z" fill="#8c8c8c"/></svg>
<svg style="left:77px;top:715px" width="13" height="10" viewBox="0 0 13 10"><path d="M1 5 L4.5 8.5 L12 1" stroke="#4fa858" stroke-width="2.6" fill="none"/></svg>
<div class="t" style="left:94px;top:711px"><b>Build project01:</b> finished <span style="color:#8c8c8c">At 2022/11/3 16:55</span></div>
<div class="t" style="left:499px;top:712px;color:#808080;font-size:11px;word-spacing:0">17 sec, 126 ms</div>
<div class="a" style="left:576px;top:710px;width:765px;height:77px;background:#2b2b2b;"></div>
<div class="m" style="left:589px;top:715px;color:#bbbbbb">> Task :app:stripDebugDebugSymbols NO-SOURCE</div>
<div class="m" style="left:589px;top:737px;color:#bbbbbb">> Task :app:validateSigningDebug UP-TO-DATE</div>
<div class="m" style="left:589px;top:759px;color:#bbbbbb">> Task :app:writeDebugAppMetadata UP-TO-DATE</div>
<div class="m" style="left:589px;top:781px;color:#bbbbbb">> Task :app:writeDebugSigningConfigVersions UP-TO-DATE</div>
<div class="a" style="left:25px;top:49px;width:153px;height:44px;border:3px solid #ff2a1f;border-radius:2px"></div>
<div class="a" style="left:40px;top:540px;width:295px;height:35px;border:3px solid #ff2a1f;border-radius:2px"></div>
<div class="a" style="left:427px;top:428px;width:544px;height:90px;border:3px solid #ff2a1f;border-radius:2px"></div>
<div class="t" style="left:1134px;top:757px;font-size:18px;line-height:22px;height:22px;color:#c4c4c4;text-shadow:1px 1px 1px #111">CSDN</div>
<div class="t" style="left:1189px;top:757px;font-size:18px;line-height:22px;height:22px;color:#c4c4c4;text-shadow:1px 1px 1px #111">@</div>
<svg style="left:1207px;top:757px" width="120" height="20" viewBox="0 0 119 20"><g fill="none" stroke="#111" stroke-width="1.5" transform="translate(1 1)" opacity="0.6"><g transform="translate(0.0 0)"><path d="M10 1.5 V17 Q10 19 7.5 18 M5.5 7 L2.5 13.5 M14.5 7 L17.5 13.5"/></g><g transform="translate(19.8 0)"><path d="M1.5 4 H18.5 M8.5 1.5 Q7.5 12 2 19 M7.5 9 L6 12.5 M15.5 9 L13.5 12.5 M11 6.5 Q11 14.5 5.5 19 M11 12.5 Q13 16.5 18 19"/></g><g transform="translate(39.6 0)"><path d="M1.5 4 H18.5 M8.5 1.5 Q7.5 12 2 19 M7.5 9 L6 12.5 M15.5 9 L13.5 12.5 M11 6.5 Q11 14.5 5.5 19 M11 12.5 Q13 16.5 18 19"/></g><g transform="translate(59.4 0)"><path d="M1 6.5 H7.5 M4.5 1.5 V17.5 Q4.5 19 3 18.5 M1 14 L7.5 11 M13 1 V3.5 M8.5 3.5 H18.5 M10.5 5.5 H16.5 V8.5 H10.5 Z M9 10.5 V19 M9 10.5 H18 V18 Q18 19 16.5 19 M11.5 12.5 H15.5 V16 H11.5 Z"/></g><g transform="translate(79.2 0)"><path d="M3.5 4.5 H16.5 V13.5 H3.5 Z M3.5 9 H16.5 M10 1 V16.5 Q10 18.5 12 18.5 H18 V16"/></g><g transform="translate(99.0 0)"><path d="M3.5 3 H15.5 L10 7.5 M10 7 V17 Q10 19 7.5 18.5 M1.5 10.5 H18.5"/></g></g><g fill="none" stroke="#c4c4c4" stroke-width="1.4"><g transform="translate(0.0 0)"><path d="M10 1.5 V17 Q10 19 7.5 18 M5.5 7 L2.5 13.5 M14.5 7 L17.5 13.5"/></g><g transform="translate(19.8 0)"><path d="M1.5 4 H18.5 M8.5 1.5 Q7.5 12 2 19 M7.5 9 L6 12.5 M15.5 9 L13.5 12.5 M11 6.5 Q11 14.5 5.5 19 M11 12.5 Q13 16.5 18 19"/></g><g transform="translate(39.6 0)"><path d="M1.5 4 H18.5 M8.5 1.5 Q7.5 12 2 19 M7.5 9 L6 12.5 M15.5 9 L13.5 12.5 M11 6.5 Q11 14.5 5.5 19 M11 12.5 Q13 16.5 18 19"/></g><g transform="translate(59.4 0)"><path d="M1 6.5 H7.5 M4.5 1.5 V17.5 Q4.5 19 3 18.5 M1 14 L7.5 11 M13 1 V3.5 M8.5 3.5 H18.5 M10.5 5.5 H16.5 V8.5 H10.5 Z M9 10.5 V19 M9 10.5 H18 V18 Q18 19 16.5 19 M11.5 12.5 H15.5 V16 H11.5 Z"/></g><g transform="translate(79.2 0)"><path d="M3.5 4.5 H16.5 V13.5 H3.5 Z M3.5 9 H16.5 M10 1 V16.5 Q10 18.5 12 18.5 H18 V16"/></g><g transform="translate(99.0 0)"><path d="M3.5 3 H15.5 L10 7.5 M10 7 V17 Q10 19 7.5 18.5 M1.5 10.5 H18.5"/></g></g></svg>
</body></html>
